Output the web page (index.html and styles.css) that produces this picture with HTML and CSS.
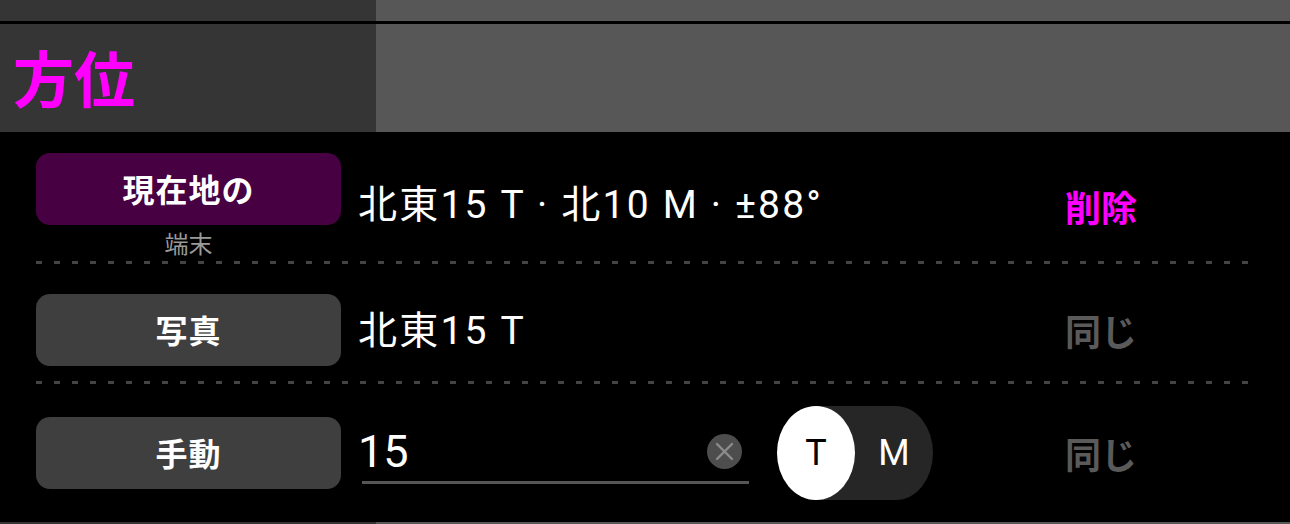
FILE: index.html
```html
<!DOCTYPE html>
<html lang="ja">
<head>
<meta charset="utf-8">
<title>方位</title>
<link rel="stylesheet" href="styles.css">
</head>
<body>
<div class="app">
  <div class="strip strip-top"></div>
  <div class="rule"></div>
  <header class="strip titlebar">
    <h1 class="title">方位</h1>
  </header>
  <section class="panel">
    <div class="row row-device">
      <div class="source">
        <button class="src-btn src-active">現在地の</button>
        <div class="src-caption">端末</div>
      </div>
      <div class="value">北東15 T · 北10 M · ±88°</div>
      <div class="action action-delete">削除</div>
    </div>
    <div class="divider"></div>
    <div class="row row-photo">
      <div class="source">
        <button class="src-btn">写真</button>
      </div>
      <div class="value">北東15 T</div>
      <div class="action action-same">同じ</div>
    </div>
    <div class="divider"></div>
    <div class="row row-manual">
      <div class="source">
        <button class="src-btn">手動</button>
      </div>
      <div class="value value-manual">
        <div class="field">
          <span class="field-text">15</span>
          <span class="clear">
            <svg width="35" height="35" viewBox="0 0 35 35">
              <circle cx="17.5" cy="17.5" r="17.5" fill="#4d4d4d"/>
              <path d="M10 10 L25 25 M25 10 L10 25" stroke="#8c8c8c" stroke-width="2.4" stroke-linecap="round"/>
            </svg>
          </span>
        </div>
        <div class="seg">
          <span class="knob">T</span>
          <span class="seg-off">M</span>
        </div>
      </div>
      <div class="action action-same">同じ</div>
    </div>
  </section>
  <div class="strip strip-bottom"></div>
</div>
</body>
</html>
```
FILE: styles.css
```css
* {
  box-sizing: border-box;
}

html, body {
  margin: 0;
  padding: 0;
  background: #000;
}

body {
  font-family: Roboto, "Noto Sans CJK JP", sans-serif;
  color: #fff;
  width: 1290px;
  height: 524px;
  overflow: hidden;
}

.app {
  display: flex;
  flex-direction: column;
  width: 1290px;
}

.strip {
  background: linear-gradient(to right, #353535 0, #353535 376px, #575757 376px, #575757 100%);
}

.strip-top {
  height: 21px;
}

.rule {
  height: 3px;
  background: #000;
}

.titlebar {
  height: 108px;
  display: flex;
  align-items: center;
  padding-left: 13px;
}

.title {
  margin: 0;
  font-family: "Noto Sans CJK JP", sans-serif;
  font-size: 61px;
  font-weight: 700;
  line-height: 1;
  color: #ff00ff;
  position: relative;
  top: -2px;
}

.panel {
  height: 390px;
  background: #000;
  display: flex;
  flex-direction: column;
}

.strip-bottom {
  height: 2px;
}

.row {
  display: flex;
  align-items: center;
  padding: 0 42px 0 36px;
}

.row-device {
  padding-top: 21px;
  padding-bottom: 5px;
}

.row-photo {
  padding-top: 30px;
  padding-bottom: 15px;
}

.row-manual {
  padding-top: 22px;
}

.divider {
  height: 3px;
  margin: 0 42px 0 36px;
  background: repeating-linear-gradient(to right, #444 0, #444 6px, transparent 6px, transparent 18px);
}

.source {
  width: 305px;
  flex: none;
  display: flex;
  flex-direction: column;
  align-items: center;
}

.src-btn {
  width: 305px;
  height: 72px;
  border: 0;
  border-radius: 14px;
  background: #3f3f3f;
  color: #fff;
  font-family: "Noto Sans CJK JP", sans-serif;
  font-size: 32px;
  font-weight: 700;
  letter-spacing: 1px;
  line-height: 1;
  padding: 0 0 3px;
  margin: 0;
}

.src-active {
  background: #470042;
}

.src-caption {
  margin-top: 5px;
  font-family: "Noto Sans CJK JP", sans-serif;
  font-size: 24px;
  line-height: 26px;
  color: #9a9a9a;
}

.value {
  flex: 1;
  margin-left: 17px;
  font-size: 39px;
  letter-spacing: 2.2px;
  line-height: 1;
  white-space: nowrap;
  position: relative;
  top: 1px;
}

.value-manual {
  display: flex;
  align-items: center;
  letter-spacing: 0;
  top: 0;
}

.field {
  width: 387px;
  height: 62px;
  margin-left: 4px;
  border-bottom: 3px solid #555;
  display: flex;
  align-items: center;
  justify-content: space-between;
  padding-right: 7px;
}

.field-text {
  font-size: 45px;
  line-height: 1;
  margin-left: -4px;
}

.clear {
  display: flex;
  width: 35px;
  height: 35px;
}

.seg {
  margin-left: 28px;
  width: 156px;
  height: 94px;
  display: flex;
  background: #262626;
  border-radius: 39px 37px 37px 39px / 47px 47px 47px 47px;
}

.knob {
  width: 78px;
  height: 94px;
  border-radius: 50%;
  background: #fff;
  color: #000;
  display: flex;
  align-items: center;
  justify-content: center;
  font-size: 36px;
  font-weight: 400;
}

.seg-off {
  flex: 1;
  display: flex;
  align-items: center;
  justify-content: center;
  font-size: 36px;
  font-weight: 400;
  color: #fff;
}

.action {
  width: 183px;
  flex: none;
  font-family: "Noto Sans CJK JP", sans-serif;
  font-size: 36px;
  font-weight: 700;
  line-height: 1;
}

.action-delete {
  color: #ff00ff;
  position: relative;
  top: 1px;
}

.action-same {
  color: #5a5a5a;
}
```
